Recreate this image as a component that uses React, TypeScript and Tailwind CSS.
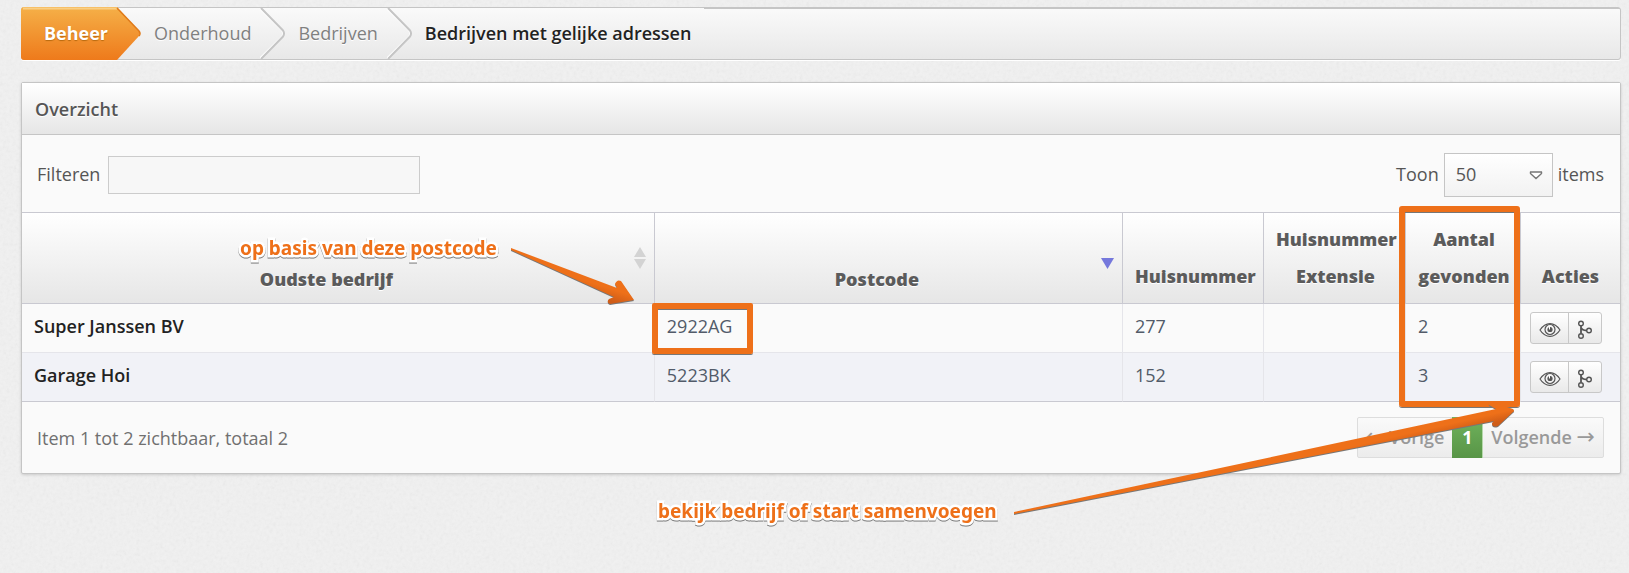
import React, { useState } from "react";

const crumbs = ["Onderhoud", "Bedrijven"];

const columns = [
  { label: "Oudste bedrijf", width: "w-[39.6%]", sort: "both" },
  { label: "Postcode", width: "", sort: "desc" },
  { label: "Huisnummer", width: "w-[141px]" },
  { label: "Huisnummer Extensie", width: "w-[142px]" },
  { label: "Aantal gevonden", width: "w-[115px]" },
  { label: "Acties", width: "w-[99px]" },
];

const companies = [
  { name: "Super Janssen BV", zip: "2922AG", number: "277", ext: "", count: 2 },
  { name: "Garage Hoi", zip: "5223BK", number: "152", ext: "", count: 3 },
];

const NOTE =
  "absolute whitespace-nowrap font-['Noto_Sans',sans-serif] text-[19px] leading-[28px] font-bold text-[#ee7019] [-webkit-text-stroke:5px_#fff] [paint-order:stroke_fill] [filter:drop-shadow(0_1px_0_#777)]";

const EyeIcon = () => (
  <svg width="22" height="16" viewBox="0 0 22 16" fill="none" stroke="#555" strokeWidth="1.2">
    <path d="M1 8C4 3.4 7.300 1.600 11 1.600S18 3.400 21 8C18 12.600 14.700 14.400 11 14.400S4 12.600 1 8Z" />
    <circle cx="11" cy="7.500" r="5" />
    <circle cx="11" cy="7.500" r="2" fill="#555" />
    <path d="M10.500 7.500V4.500" stroke="#fff" strokeWidth="1" />
  </svg>
);

const MergeIcon = () => (
  <svg width="16" height="20" viewBox="0 0 16 20" fill="none" stroke="#555" strokeWidth="1.400">
    <circle cx="4" cy="3.500" r="2.300" />
    <circle cx="4" cy="16" r="2.300" />
    <circle cx="12" cy="10.500" r="2.300" />
    <path d="M4 6V13.500M4 7.500C5 10 7 10.500 9.500 10.500" strokeWidth="1.800" />
  </svg>
);

const Chevron = () => (
  <svg className="h-full w-[25px] shrink-0" viewBox="0 0 25 51" preserveAspectRatio="none" fill="none">
    <path d="M-1 0L22 22.500Q24 25.500 22 28.500L-1 51" stroke="#fff" strokeWidth="1.500" />
    <path d="M1 0L23 22.500Q25 25.500 23 28.500L1 51" stroke="#c5c5c5" strokeWidth="2" />
  </svg>
);

const App: React.FC = () => {
  const [filter, setFilter] = useState("");
  const [pageSize, setPageSize] = useState("50");

  return (
    <div className="relative min-h-screen overflow-hidden bg-[#f1f1f1] pt-[7px] pr-2 pl-[21px] font-['Open_Sans',sans-serif] text-[18px] leading-[27px] text-[#555]">
      <svg className="pointer-events-none absolute inset-0 h-full w-full opacity-10">
        <filter id="grain">
          <feTurbulence type="fractalNoise" baseFrequency="0.3" numOctaves="3" />
          <feColorMatrix type="saturate" values="0" />
        </filter>
        <rect width="100%" height="100%" filter="url(#grain)" />
      </svg>

      {/* Breadcrumb */}
      <nav className="relative flex h-[53px] items-center rounded-[3px] border border-[#c5c5c5] bg-linear-to-b from-[#fafafa] to-[#e8e8e8] shadow-[0_1px_0_#fff] [text-shadow:0_1px_0_#fff]">
        <div className="absolute top-0 right-0 left-[682px] h-px bg-[#c5c5c5]" />
        <svg className="absolute -top-px -left-px h-[53px] w-[121px]" viewBox="0 0 121 53">
          <defs>
            <linearGradient id="orange" x1="0" y1="0" x2="0" y2="1">
              <stop offset="0" stopColor="#f5b048" />
              <stop offset="1" stopColor="#ee7a1b" />
            </linearGradient>
          </defs>
          <path d="M3 0H96L118 24Q120 26.500 118 29L96 53H3Q0 53 0 50V3Q0 0 3 0Z" fill="url(#orange)" />
          <path d="M2 1.500H96" stroke="#f9cf85" strokeWidth="2" />
          <path d="M96 1L118 24Q120 26.500 118 29" fill="none" stroke="#e07a1a" strokeWidth="1.500" />
        </svg>
        <a href="#" className="relative mr-[46px] ml-[22px] font-bold text-white [text-shadow:0_1px_1px_#b86a10]">
          Beheer
        </a>
        {crumbs.map((c) => (
          <React.Fragment key={c}>
            <a href="#" className="mr-[9px] text-[#808080]">
              {c}
            </a>
            <Chevron />
            <span className="w-[13px]" />
          </React.Fragment>
        ))}
        <span className="font-semibold text-[#222]">Bedrijven met gelijke adressen</span>
      </nav>

      <section className="relative mt-[22px] rounded-[2px] border border-[#c5c5c5] bg-[#fafafa] shadow-[0_1px_3px_rgba(0,0,0,0.15)]">
        <h2 className="flex h-[52px] items-center border-b border-[#c5c5c5] bg-linear-to-b from-white to-[#e6e6e6] px-[13px] pt-[2px] font-semibold [text-shadow:0_1px_0_#fff]">
          Overzicht
        </h2>

        <div className="flex h-[77px] items-center justify-between pt-[2px] pr-4 pl-[15px]">
          <label className="flex items-center gap-2">
            Filteren
            <input
              type="text"
              value={filter}
              onChange={(e) => setFilter(e.target.value)}
              className="h-[38px] w-[312px] border border-[#ccc] bg-[#f7f7f7] px-2 outline-none"
            />
          </label>
          <div className="flex items-center gap-[5px]">
            <label htmlFor="pageSize">Toon</label>
            <div className="relative">
              <select
                id="pageSize"
                value={pageSize}
                onChange={(e) => setPageSize(e.target.value)}
                className="block h-[44px] w-[109px] appearance-none border border-[#c5c5c5] bg-linear-to-b from-white to-[#f2f2f2] px-[11px] outline-none"
              >
                <option>25</option>
                <option>50</option>
                <option>100</option>
              </select>
              <svg className="pointer-events-none absolute top-[18px] right-[10px]" width="14" height="9" viewBox="0 0 14 9">
                <path d="M1.500 1H12.500Q13 2 12 3L7 7.500L2 3Q1 2 1.500 1Z" fill="#fff" stroke="#777" strokeWidth="1.400" />
              </svg>
            </div>
            <label htmlFor="pageSize">items</label>
          </div>
        </div>

        <table className="w-full table-fixed border-separate border-spacing-0">
          <thead>
            <tr className="h-[92px] bg-linear-to-b from-white to-[#e6e6e6]">
              {columns.map((col) => (
                <th
                  key={col.label}
                  className={`relative border-y border-r border-[#c9c9d1] pl-3 align-bottom leading-[37px] font-extrabold text-[#5b5b5b] [text-shadow:0_1px_0_#fff] last:border-r-0 ${
                    col.sort ? "pr-[35px] pb-[5px]" : "pr-[10px] pb-[8px] last:pr-3"
                  } ${col.width}`}
                >
                  {col.label}
                  {col.sort === "both" && (
                    <svg className="absolute top-[34px] right-2" width="12" height="22" viewBox="0 0 12 22" fill="#d3d3d3">
                      <path d="M6 0L12 10H0ZM0 12H12L6 22Z" />
                    </svg>
                  )}
                  {col.sort === "desc" && (
                    <svg className="absolute top-[45px] right-2" width="13" height="11" viewBox="0 0 13 11" fill="#7578dc">
                      <path d="M0 0H13L6.500 11Z" />
                    </svg>
                  )}
                </th>
              ))}
            </tr>
          </thead>
          <tbody className="text-[#525b69] [&>tr:last-child>td]:border-b-[#c9c9d1]">
            {companies.map((row) => (
              <tr
                key={row.name}
                className="h-[49px] even:bg-[#f1f2f7] [&>td]:border-r [&>td]:border-b [&>td]:border-[#e5e5ea] [&>td]:px-3 [&>td]:pb-1 [&>td]:last:border-r-0 [&>td]:last:px-[9px] [&>td]:last:pb-0"
              >
                <td className="font-semibold text-[#222]">{row.name}</td>
                <td>{row.zip}</td>
                <td>{row.number}</td>
                <td>{row.ext}</td>
                <td>{row.count}</td>
                <td>
                  <div className="flex h-8 w-[72px] overflow-hidden rounded-[3px] border border-[#c8c8c8] bg-linear-to-b from-white to-[#e9e9e9]">
                    <button type="button" aria-label="Bekijken" className="flex w-[38px] items-center justify-center border-r border-[#c8c8c8] pt-1">
                      <EyeIcon />
                    </button>
                    <button type="button" aria-label="Samenvoegen" className="flex flex-1 items-center justify-center pt-1">
                      <MergeIcon />
                    </button>
                  </div>
                </td>
              </tr>
            ))}
          </tbody>
        </table>

        <div className="flex h-[71px] items-center justify-between pr-4 pl-[15px]">
          <span className="pt-[2px] text-[#707070]">Item 1 tot 2 zichtbaar, totaal 2</span>
          <div className="flex h-[41px] items-stretch rounded-[2px] border border-[#ddd] bg-linear-to-b from-[#fafafa] to-[#ececec] font-semibold text-[#999]">
            <button type="button" className="px-2">
              <span className="font-['DejaVu_Sans',sans-serif] text-[22px] leading-none font-normal">←</span> Vorige
            </button>
            <button type="button" className="-my-px w-[31px] border-r border-[#b5d8ab] bg-linear-to-b from-[#6fb25c] to-[#589547] font-bold text-white">
              1
            </button>
            <button type="button" className="px-2">
              Volgende <span className="font-['DejaVu_Sans',sans-serif] text-[22px] leading-none font-normal">→</span>
            </button>
          </div>
        </div>
      </section>

      {/* Annotations */}
      <div className="pointer-events-none absolute top-[303px] left-[652px] h-[51px] w-[101px] rounded-[2px] border-6 border-[#ee7019] shadow-[0_1px_0_#777,inset_0_1px_0_#777]" />
      <div className="pointer-events-none absolute top-[206px] right-[109px] h-[201px] w-[121px] rounded-[3px] border-6 border-[#ee7019] shadow-[0_1px_0_#777,inset_0_1px_0_#777]" />
      <p className={`${NOTE} top-[234px] left-[240px]`}>op basis van deze postcode</p>
      <p className={`${NOTE} top-[497px] left-[658px]`}>bekijk bedrijf of start samenvoegen</p>
      <svg className="pointer-events-none absolute top-[245px] left-[508px] [filter:drop-shadow(0_1px_0_#777)]" width="130" height="62" viewBox="0 0 130 62">
        <defs>
          <linearGradient id="shaftA" gradientUnits="userSpaceOnUse" x1="108" y1="40" x2="103" y2="56">
            <stop offset="0.300" stopColor="#ee7019" />
            <stop offset="1" stopColor="#cf5c17" />
          </linearGradient>
        </defs>
        <path d="M3 3L109 43L107 39Q109 34 113 36L126 55L102 59Q98 57 101 54L106 52L3 5Z" fill="url(#shaftA)" />
      </svg>
      <svg className="pointer-events-none absolute top-[400px] right-[112px] [filter:drop-shadow(0_1px_0_#777)]" width="504" height="118" viewBox="0 0 504 118">
        <defs>
          <linearGradient id="shaftB" gradientUnits="userSpaceOnUse" x1="479" y1="10" x2="482" y2="23">
            <stop offset="0.300" stopColor="#ee7019" />
            <stop offset="1" stopColor="#cf5c17" />
          </linearGradient>
        </defs>
        <path d="M1 112L483 9L476 5Q475 2 479 2L500 9Q502 11 500 12L485 26Q479 28 479 23L481 21L1 114Z" fill="url(#shaftB)" />
      </svg>
    </div>
  );
};

export default App;
